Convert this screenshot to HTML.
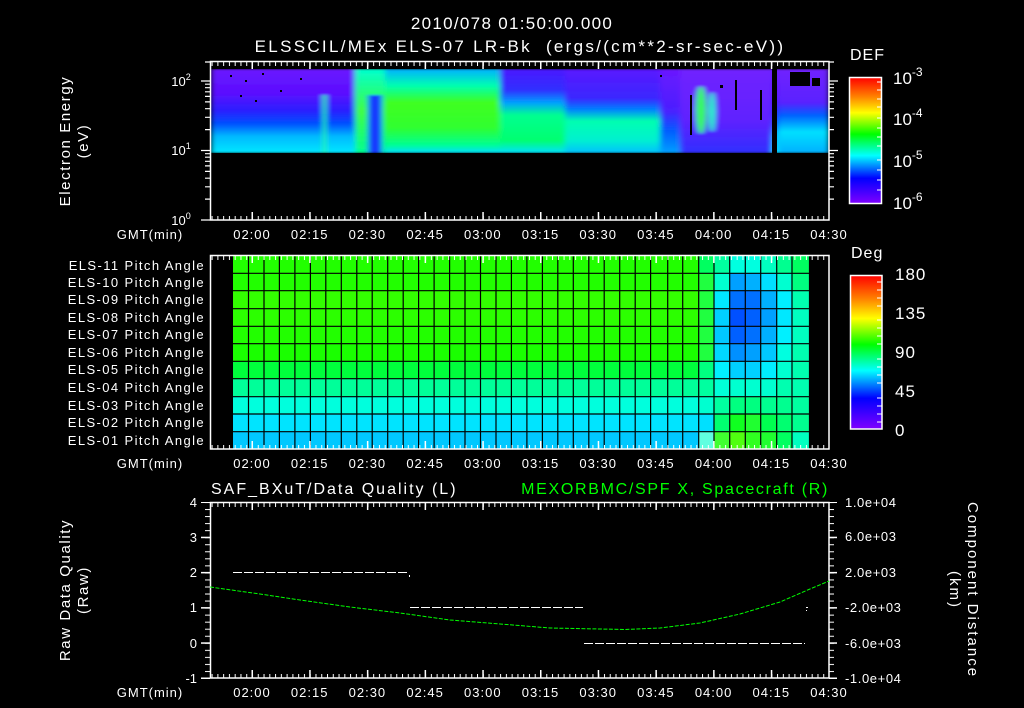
<!DOCTYPE html>
<html><head><meta charset="utf-8"><style>
html,body{margin:0;padding:0;background:#000;width:1024px;height:708px;overflow:hidden}
svg{display:block}
text{font-family:"Liberation Sans",sans-serif;fill:#fff}
.tk{letter-spacing:1px}
</style></head><body>
<svg width="1024" height="708" viewBox="0 0 1024 708" xmlns="http://www.w3.org/2000/svg">
<defs>
<pattern id="tv" x="252" y="0" width="5.77" height="708" patternUnits="userSpaceOnUse"><rect x="0" y="0" width="1" height="708" fill="#fff"/></pattern>
<pattern id="tvM" x="251.5" y="0" width="57.7" height="708" patternUnits="userSpaceOnUse"><rect x="0" y="0" width="1.5" height="708" fill="#fff"/></pattern>
<pattern id="th" x="0" y="502" width="1024" height="7.04" patternUnits="userSpaceOnUse"><rect x="0" y="0" width="1024" height="1" fill="#fff"/></pattern>
<pattern id="thM" x="0" y="501.5" width="1024" height="35.2" patternUnits="userSpaceOnUse"><rect x="0" y="0" width="1024" height="1.5" fill="#fff"/></pattern>
<filter id="bl" x="0" y="0" width="1" height="1"><feGaussianBlur stdDeviation="3 1" edgeMode="duplicate"/></filter>
<clipPath id="cp"><rect x="211" y="69" width="618" height="84"/></clipPath>
<linearGradient id="g1" x1="0" y1="0" x2="0" y2="1"><stop offset="0" stop-color="#6a14ff"/><stop offset=".3" stop-color="#5a10ff"/><stop offset=".5" stop-color="#2a20ff"/><stop offset=".65" stop-color="#0050ff"/><stop offset=".8" stop-color="#00b8ff"/><stop offset="1" stop-color="#00e8ff"/></linearGradient>
<linearGradient id="g2" x1="0" y1="0" x2="0" y2="1"><stop offset="0" stop-color="#00ffd0"/><stop offset=".5" stop-color="#40ff40"/><stop offset="1" stop-color="#00ff90"/></linearGradient>
<linearGradient id="g3" x1="0" y1="0" x2="0" y2="1"><stop offset="0" stop-color="#00b0ff"/><stop offset=".2" stop-color="#00ffb0"/><stop offset=".4" stop-color="#40ff20"/><stop offset=".7" stop-color="#30ff30"/><stop offset=".9" stop-color="#00ff90"/><stop offset="1" stop-color="#00e0ff"/></linearGradient>
<linearGradient id="g4" x1="0" y1="0" x2="0" y2="1"><stop offset="0" stop-color="#4a18ff"/><stop offset=".25" stop-color="#3030ff"/><stop offset=".4" stop-color="#00a0ff"/><stop offset=".55" stop-color="#00ff90"/><stop offset=".85" stop-color="#00ff70"/><stop offset="1" stop-color="#00e0ff"/></linearGradient>
<linearGradient id="g5" x1="0" y1="0" x2="0" y2="1"><stop offset="0" stop-color="#5a18ff"/><stop offset=".35" stop-color="#3a28ff"/><stop offset=".48" stop-color="#0080ff"/><stop offset=".62" stop-color="#00ffb0"/><stop offset=".85" stop-color="#00f0d0"/><stop offset="1" stop-color="#00c0ff"/></linearGradient>
<linearGradient id="g6" x1="0" y1="0" x2="0" y2="1"><stop offset="0" stop-color="#6a18ff"/><stop offset=".5" stop-color="#4a20ff"/><stop offset=".75" stop-color="#0060ff"/><stop offset="1" stop-color="#00a0ff"/></linearGradient>
<linearGradient id="g7" x1="0" y1="0" x2="0" y2="1"><stop offset="0" stop-color="#7020ff"/><stop offset=".6" stop-color="#6020ff"/><stop offset="1" stop-color="#3030ff"/></linearGradient>
<linearGradient id="g8" x1="0" y1="0" x2="0" y2="1"><stop offset="0" stop-color="#7020ff"/><stop offset=".4" stop-color="#5a20ff"/><stop offset=".55" stop-color="#0060ff"/><stop offset=".75" stop-color="#00e0ff"/><stop offset="1" stop-color="#00b0ff"/></linearGradient>
<linearGradient id="cb" x1="0" y1="0" x2="0" y2="1"><stop offset="0" stop-color="#ff0000"/><stop offset=".15" stop-color="#ff8000"/><stop offset=".28" stop-color="#ffff00"/><stop offset=".45" stop-color="#00ff00"/><stop offset=".62" stop-color="#00ffff"/><stop offset=".8" stop-color="#0000ff"/><stop offset="1" stop-color="#8000ff"/></linearGradient>
</defs>

<!-- titles -->
<text x="512" y="29" font-size="17" text-anchor="middle" style="letter-spacing:1.3px">2010/078 01:50:00.000</text>
<text x="520" y="52" font-size="17" text-anchor="middle" style="letter-spacing:2.3px;white-space:pre" xml:space="preserve">ELSSCIL/MEx ELS-07 LR-Bk  (ergs/(cm**2-sr-sec-eV))</text>

<!-- ===== TOP PANEL ===== -->
<g clip-path="url(#cp)">
<g filter="url(#bl)">
<rect x="211" y="69" width="618" height="84" fill="url(#g1)"/>
<rect x="323" y="95" width="3" height="58" fill="#20ff80"/>
<rect x="355" y="69" width="30" height="84" fill="url(#g2)"/>
<rect x="368" y="95" width="14" height="58" fill="#1838ff"/>
<rect x="385" y="69" width="115" height="84" fill="url(#g3)"/>
<rect x="500" y="69" width="65" height="84" fill="url(#g4)"/>
<rect x="565" y="69" width="95" height="84" fill="url(#g5)"/>
<rect x="660" y="69" width="20" height="84" fill="url(#g6)"/>
<rect x="680" y="69" width="92" height="84" fill="url(#g7)"/>
<ellipse cx="701" cy="110" rx="5" ry="24" fill="#30ff50"/>
<ellipse cx="712" cy="112" rx="3" ry="20" fill="#00ffc0"/>
<rect x="778" y="69" width="51" height="84" fill="url(#g8)"/>
</g>
<rect x="772" y="69" width="5" height="84" fill="#000"/>
<g fill="#000">
<rect x="230" y="75" width="2" height="2"/><rect x="245" y="80" width="2" height="2"/><rect x="262" y="73" width="2" height="2"/><rect x="280" y="90" width="2" height="2"/><rect x="300" y="78" width="2" height="2"/><rect x="240" y="95" width="2" height="2"/><rect x="255" y="100" width="2" height="2"/>
<rect x="690" y="95" width="2" height="40"/><rect x="735" y="80" width="2" height="30"/><rect x="760" y="90" width="2" height="30"/><rect x="790" y="72" width="20" height="14"/><rect x="812" y="78" width="8" height="8"/><rect x="660" y="75" width="2" height="2"/><rect x="720" y="85" width="3" height="3"/>
</g>
</g>
<!-- frame -->
<rect x="210.5" y="61.5" width="618.5" height="158.5" fill="none" stroke="#fff" stroke-width="1.5"/>
<rect x="210" y="62" width="619" height="4" fill="url(#tv)"/>
<rect x="210" y="62" width="619" height="7" fill="url(#tvM)"/>
<rect x="210" y="216" width="619" height="4" fill="url(#tv)"/>
<rect x="210" y="212" width="619" height="8" fill="url(#tvM)"/>
<g stroke="#fff" stroke-width="1.2">
<path d="M201 220H210M201 150.5H210M201 81H210M205 199.1H210M205 186.8H210M205 178.2H210M205 171.4H210M205 165.9H210M205 161.3H210M205 157.2H210M205 153.7H210M205 129.6H210M205 117.3H210M205 108.7H210M205 101.9H210M205 96.4H210M205 91.8H210M205 87.7H210M205 84.2H210M205 62H210"/>
<path d="M829 81H838M829 150.5H838M829 199.1H834M829 186.8H834M829 178.2H834M829 171.4H834M829 165.9H834M829 161.3H834M829 157.2H834M829 153.7H834M829 129.6H834M829 117.3H834M829 108.7H834M829 101.9H834M829 96.4H834M829 91.8H834M829 87.7H834M829 84.2H834M829 62H834"/>
</g>
<text x="181" y="225" font-size="13" text-anchor="middle">10<tspan font-size="9" dy="-6">0</tspan></text>
<text x="181" y="155" font-size="13" text-anchor="middle">10<tspan font-size="9" dy="-6">1</tspan></text>
<text x="181" y="86" font-size="13" text-anchor="middle">10<tspan font-size="9" dy="-6">2</tspan></text>
<text transform="translate(70,141) rotate(-90)" font-size="15" text-anchor="middle" style="letter-spacing:1.6px">Electron Energy</text>
<text transform="translate(88,141) rotate(-90)" font-size="15" text-anchor="middle" style="letter-spacing:1.6px">(eV)</text>
<g font-size="13" text-anchor="middle" class="tk">
<text x="150" y="239">GMT(min)</text>
<text x="252" y="239">02:00</text><text x="309.7" y="239">02:15</text><text x="367.4" y="239">02:30</text><text x="425.1" y="239">02:45</text><text x="482.8" y="239">03:00</text><text x="540.5" y="239">03:15</text><text x="598.2" y="239">03:30</text><text x="655.9" y="239">03:45</text><text x="713.6" y="239">04:00</text><text x="771.3" y="239">04:15</text><text x="829" y="239">04:30</text>
</g>
<!-- DEF colorbar -->
<text x="850" y="60" font-size="16" style="letter-spacing:1px">DEF</text>
<rect x="849.5" y="77.5" width="32" height="126" fill="url(#cb)" stroke="#fff" stroke-width="1.5"/>
<g stroke="#fff" stroke-width="1"><path d="M877 82H882M877 90H882M877 99H882M877 107H882M877 118H882M877 128H882M877 137H882M877 146H882M877 160H882M877 170H882M877 180H882M877 190H882"/></g>
<g font-size="17">
<text x="893" y="84">10<tspan font-size="12" dy="-8">-3</tspan></text>
<text x="893" y="125">10<tspan font-size="12" dy="-8">-4</tspan></text>
<text x="893" y="167">10<tspan font-size="12" dy="-8">-5</tspan></text>
<text x="893" y="209">10<tspan font-size="12" dy="-8">-6</tspan></text>
</g>

<!-- ===== MIDDLE PANEL ===== -->
<g>
<rect x="233" y="255.3" width="467" height="18" fill="#22ff00"/>
<rect x="233" y="273.3" width="467" height="17.4" fill="#22ff00"/>
<rect x="233" y="290.7" width="467" height="18" fill="#33ff00"/>
<rect x="233" y="308.7" width="467" height="17.6" fill="#2cff00"/>
<rect x="233" y="326.3" width="467" height="17.4" fill="#22ff00"/>
<rect x="233" y="343.7" width="467" height="17.6" fill="#1aff00"/>
<rect x="233" y="361.3" width="467" height="17.4" fill="#00ff3c"/>
<rect x="233" y="378.7" width="467" height="18" fill="#00ff99"/>
<rect x="233" y="396.7" width="467" height="17.3" fill="#00ffdd"/>
<rect x="233" y="414" width="467" height="17.7" fill="#00e4ff"/>
<rect x="233" y="431.7" width="467" height="17.6" fill="#00c8ff"/>
</g>
<g>
<g transform="translate(699,0)">
<rect y="255.3" width="15" height="18" fill="#00ff60"/><rect y="273.3" width="15" height="17.4" fill="#20ff40"/><rect y="290.7" width="15" height="18" fill="#20ff40"/><rect y="308.7" width="15" height="17.6" fill="#20ff40"/><rect y="326.3" width="15" height="17.4" fill="#20ff40"/><rect y="343.7" width="15" height="17.6" fill="#20ff40"/><rect y="361.3" width="15" height="17.4" fill="#00ff80"/><rect y="378.7" width="15" height="18" fill="#00ffa0"/><rect y="396.7" width="15" height="17.3" fill="#00ffd0"/><rect y="414" width="15" height="17.7" fill="#00e0ff"/><rect y="431.7" width="15" height="17.6" fill="#60ffe0"/>
</g>
<g transform="translate(714,0)">
<rect y="255.3" width="16" height="18" fill="#00ffa0"/><rect y="273.3" width="16" height="17.4" fill="#00ffd0"/><rect y="290.7" width="16" height="18" fill="#00e8ff"/><rect y="308.7" width="16" height="17.6" fill="#00d0ff"/><rect y="326.3" width="16" height="17.4" fill="#00c8ff"/><rect y="343.7" width="16" height="17.6" fill="#00d8ff"/><rect y="361.3" width="16" height="17.4" fill="#00f0ff"/><rect y="378.7" width="16" height="18" fill="#00ffd8"/><rect y="396.7" width="16" height="17.3" fill="#00ffa0"/><rect y="414" width="16" height="17.7" fill="#00ff70"/><rect y="431.7" width="16" height="17.6" fill="#40ff30"/>
</g>
<g transform="translate(730,0)">
<rect y="255.3" width="15" height="18" fill="#00ffe0"/><rect y="273.3" width="15" height="17.4" fill="#00a0ff"/><rect y="290.7" width="15" height="18" fill="#0070ff"/><rect y="308.7" width="15" height="17.6" fill="#0050ff"/><rect y="326.3" width="15" height="17.4" fill="#0060ff"/><rect y="343.7" width="15" height="17.6" fill="#0090ff"/><rect y="361.3" width="15" height="17.4" fill="#00d0ff"/><rect y="378.7" width="15" height="18" fill="#00ffd0"/><rect y="396.7" width="15" height="17.3" fill="#00ff80"/><rect y="414" width="15" height="17.7" fill="#10ff20"/><rect y="431.7" width="15" height="17.6" fill="#50ff10"/>
</g>
<g transform="translate(745,0)">
<rect y="255.3" width="16" height="18" fill="#00ffe0"/><rect y="273.3" width="16" height="17.4" fill="#00b0ff"/><rect y="290.7" width="16" height="18" fill="#0070ff"/><rect y="308.7" width="16" height="17.6" fill="#0060ff"/><rect y="326.3" width="16" height="17.4" fill="#0070ff"/><rect y="343.7" width="16" height="17.6" fill="#00a0ff"/><rect y="361.3" width="16" height="17.4" fill="#00d0ff"/><rect y="378.7" width="16" height="18" fill="#00ffd0"/><rect y="396.7" width="16" height="17.3" fill="#00ff80"/><rect y="414" width="16" height="17.7" fill="#20ff30"/><rect y="431.7" width="16" height="17.6" fill="#30ff20"/>
</g>
<g transform="translate(761,0)">
<rect y="255.3" width="16" height="18" fill="#00ffc0"/><rect y="273.3" width="16" height="17.4" fill="#00e0ff"/><rect y="290.7" width="16" height="18" fill="#00b0ff"/><rect y="308.7" width="16" height="17.6" fill="#00a0ff"/><rect y="326.3" width="16" height="17.4" fill="#00b0ff"/><rect y="343.7" width="16" height="17.6" fill="#00c8ff"/><rect y="361.3" width="16" height="17.4" fill="#00eeff"/><rect y="378.7" width="16" height="18" fill="#00ffd0"/><rect y="396.7" width="16" height="17.3" fill="#00ff90"/><rect y="414" width="16" height="17.7" fill="#00ff50"/><rect y="431.7" width="16" height="17.6" fill="#20ff30"/>
</g>
<g transform="translate(777,0)">
<rect y="255.3" width="15" height="18" fill="#00ff90"/><rect y="273.3" width="15" height="17.4" fill="#00ffd0"/><rect y="290.7" width="15" height="18" fill="#00f0ff"/><rect y="308.7" width="15" height="17.6" fill="#00e8ff"/><rect y="326.3" width="15" height="17.4" fill="#00f0ff"/><rect y="343.7" width="15" height="17.6" fill="#00ffe0"/><rect y="361.3" width="15" height="17.4" fill="#00ffd0"/><rect y="378.7" width="15" height="18" fill="#00ffb0"/><rect y="396.7" width="15" height="17.3" fill="#00ff90"/><rect y="414" width="15" height="17.7" fill="#00ff70"/><rect y="431.7" width="15" height="17.6" fill="#00ff60"/>
</g>
<g transform="translate(792,0)">
<rect y="255.3" width="17" height="18" fill="#00ff60"/><rect y="273.3" width="17" height="17.4" fill="#00ff80"/><rect y="290.7" width="17" height="18" fill="#00ffb0"/><rect y="308.7" width="17" height="17.6" fill="#00ffc0"/><rect y="326.3" width="17" height="17.4" fill="#00ffc0"/><rect y="343.7" width="17" height="17.6" fill="#00ffb0"/><rect y="361.3" width="17" height="17.4" fill="#00ffb0"/><rect y="378.7" width="17" height="18" fill="#00ffb0"/><rect y="396.7" width="17" height="17.3" fill="#00ffa0"/><rect y="414" width="17" height="17.7" fill="#00ff90"/><rect y="431.7" width="17" height="17.6" fill="#00ffc0"/>
</g>
</g>
<g stroke="#000" stroke-width="1.2">
<path d="M233 273.3H809M233 290.7H809M233 308.7H809M233 326.3H809M233 343.7H809M233 361.3H809M233 378.7H809M233 396.7H809M233 414H809M233 431.7H809"/>
<path d="M248.5 255V449M264 255V449M279.4 255V449M294.9 255V449M310.4 255V449M325.8 255V449M341.3 255V449M356.8 255V449M372.2 255V449M387.7 255V449M403.2 255V449M418.6 255V449M434.1 255V449M449.6 255V449M465 255V449M480.5 255V449M496 255V449M511.4 255V449M526.9 255V449M542.4 255V449M557.8 255V449M573.3 255V449M588.8 255V449M604.2 255V449M619.7 255V449M635.2 255V449M650.6 255V449M667.7 255V449M682.7 255V449M698.7 255V449M714 255V449M729.7 255V449M745.3 255V449M760.7 255V449M776.7 255V449M792 255V449M809.5 255V449"/>
</g>
<rect x="210.5" y="255.5" width="618.5" height="193.5" fill="none" stroke="#fff" stroke-width="1.5"/>
<rect x="210" y="256" width="619" height="4" fill="url(#tv)"/>
<rect x="210" y="256" width="619" height="7" fill="url(#tvM)"/>
<rect x="210" y="445" width="619" height="4" fill="url(#tv)"/>
<rect x="210" y="441" width="619" height="8" fill="url(#tvM)"/>
<g font-size="13" text-anchor="end" style="letter-spacing:1.4px">
<text x="205" y="270">ELS-11 Pitch Angle</text>
<text x="205" y="287">ELS-10 Pitch Angle</text>
<text x="205" y="304">ELS-09 Pitch Angle</text>
<text x="205" y="322">ELS-08 Pitch Angle</text>
<text x="205" y="339">ELS-07 Pitch Angle</text>
<text x="205" y="357">ELS-06 Pitch Angle</text>
<text x="205" y="374">ELS-05 Pitch Angle</text>
<text x="205" y="392">ELS-04 Pitch Angle</text>
<text x="205" y="410">ELS-03 Pitch Angle</text>
<text x="205" y="427">ELS-02 Pitch Angle</text>
<text x="205" y="445">ELS-01 Pitch Angle</text>
</g>
<g font-size="13" text-anchor="middle" class="tk">
<text x="150" y="468">GMT(min)</text>
<text x="252" y="468">02:00</text><text x="309.7" y="468">02:15</text><text x="367.4" y="468">02:30</text><text x="425.1" y="468">02:45</text><text x="482.8" y="468">03:00</text><text x="540.5" y="468">03:15</text><text x="598.2" y="468">03:30</text><text x="655.9" y="468">03:45</text><text x="713.6" y="468">04:00</text><text x="771.3" y="468">04:15</text><text x="829" y="468">04:30</text>
</g>
<text x="851" y="258" font-size="16" style="letter-spacing:1px">Deg</text>
<rect x="850.5" y="275.5" width="31.5" height="153.5" fill="url(#cb)" stroke="#fff" stroke-width="1.5"/>
<g stroke="#fff" stroke-width="1"><path d="M877 282H882M877 290H882M877 298H882M877 306H882M877 320H882M877 328H882M877 336H882M877 344H882M877 359H882M877 367H882M877 375H882M877 383H882M877 398H882M877 406H882M877 414H882M877 422H882"/></g>
<g font-size="17" style="letter-spacing:1px">
<text x="895" y="280">180</text><text x="895" y="319">135</text><text x="895" y="358">90</text><text x="895" y="397">45</text><text x="895" y="436">0</text>
</g>

<!-- ===== BOTTOM PANEL ===== -->
<text x="211" y="494" font-size="16" style="letter-spacing:2px">SAF_BXuT/Data Quality (L)</text>
<text x="829" y="494" font-size="16" text-anchor="end" style="fill:#00ff00;letter-spacing:1.7px">MEXORBMC/SPF X, Spacecraft (R)</text>
<rect x="210.5" y="502.5" width="618.5" height="175.5" fill="none" stroke="#fff" stroke-width="1.5"/>
<rect x="210" y="503" width="619" height="4" fill="url(#tv)"/>
<rect x="210" y="503" width="619" height="7" fill="url(#tvM)"/>
<rect x="210" y="674" width="619" height="4" fill="url(#tv)"/>
<rect x="210" y="670" width="619" height="8" fill="url(#tvM)"/>
<rect x="205" y="502" width="5" height="177" fill="url(#th)"/>
<rect x="201" y="502" width="9" height="177" fill="url(#thM)"/>
<rect x="829" y="502" width="5" height="177" fill="url(#th)"/>
<rect x="829" y="502" width="8" height="177" fill="url(#thM)"/>
<g font-size="13" text-anchor="end">
<text x="197" y="507">4</text><text x="197" y="542">3</text><text x="197" y="577">2</text><text x="197" y="612">1</text><text x="197" y="648">0</text><text x="197" y="683">-1</text>
</g>
<g font-size="13" style="letter-spacing:0.6px">
<text x="845" y="507">1.0e+04</text><text x="845" y="541">6.0e+03</text><text x="845" y="577">2.0e+03</text><text x="845" y="612">-2.0e+03</text><text x="845" y="648">-6.0e+03</text><text x="845" y="683">-1.0e+04</text>
</g>
<text transform="translate(70,590) rotate(-90)" font-size="15" text-anchor="middle" style="letter-spacing:1.6px">Raw Data Quality</text>
<text transform="translate(88,590) rotate(-90)" font-size="15" text-anchor="middle" style="letter-spacing:1.6px">(Raw)</text>
<text transform="translate(968,590) rotate(90)" font-size="15" text-anchor="middle" style="letter-spacing:2px">Component Distance</text>
<text transform="translate(950,590) rotate(90)" font-size="15" text-anchor="middle" style="letter-spacing:2px">(km)</text>
<g stroke="#fff" stroke-width="1" fill="none" stroke-dasharray="9 2">
<path d="M233 572.5H409"/><path d="M410 607.5H583"/><path d="M584 643.5H805"/>
</g>
<rect x="409" y="575" width="1" height="2" fill="#fff"/>
<rect x="806" y="607" width="2" height="1" fill="#fff"/><rect x="806" y="610" width="1" height="1" fill="#fff"/>
<polyline points="210,587 260,594 300,600 350,607 400,613 450,620 500,624 550,628 600,629 625,629.5 660,628 700,623 740,614 780,602 810,589 829,581" fill="none" stroke="#00ff00" stroke-width="1" stroke-dasharray="4 1.5"/>
<g font-size="13" text-anchor="middle" class="tk">
<text x="150" y="697">GMT(min)</text>
<text x="252" y="697">02:00</text><text x="309.7" y="697">02:15</text><text x="367.4" y="697">02:30</text><text x="425.1" y="697">02:45</text><text x="482.8" y="697">03:00</text><text x="540.5" y="697">03:15</text><text x="598.2" y="697">03:30</text><text x="655.9" y="697">03:45</text><text x="713.6" y="697">04:00</text><text x="771.3" y="697">04:15</text><text x="829" y="697">04:30</text>
</g>
</svg>
</body></html>
